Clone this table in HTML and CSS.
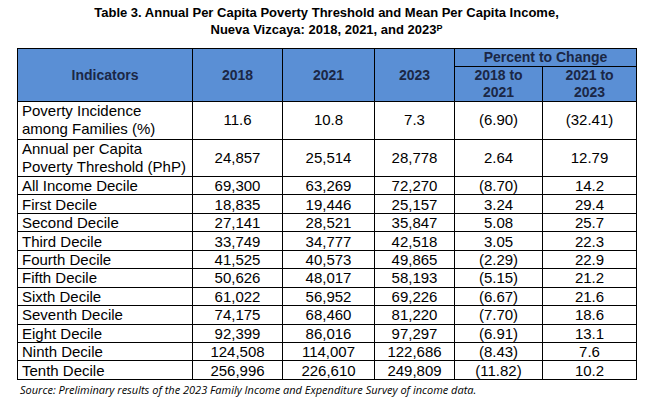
FILE: index.html
```html
<!DOCTYPE html>
<html>
<head>
<meta charset="utf-8">
<link rel="stylesheet" href="styles.css">
</head>
<body>
<div class="page">
  <h1 class="title">Table 3. Annual Per Capita Poverty Threshold and Mean Per Capita Income,<br>Nueva Vizcaya: 2018, 2021, and 2023<span class="sup">P</span></h1>
  <table class="data">
    <colgroup>
      <col class="c-ind"><col class="c-y1"><col class="c-y2"><col class="c-y3"><col class="c-p1"><col class="c-p2">
    </colgroup>
    <thead>
      <tr class="h1">
        <th rowspan="2">Indicators</th>
        <th rowspan="2">2018</th>
        <th rowspan="2">2021</th>
        <th rowspan="2">2023</th>
        <th colspan="2" class="pct">Percent to Change</th>
      </tr>
      <tr class="h2">
        <th>2018 to<br>2021</th>
        <th>2021 to<br>2023</th>
      </tr>
    </thead>
    <tbody>
      <tr class="tall"><td class="ind">Poverty Incidence<br>among Families (%)</td><td>11.6</td><td>10.8</td><td>7.3</td><td>(6.90)</td><td>(32.41)</td></tr>
      <tr class="tall"><td class="ind">Annual per Capita<br>Poverty Threshold (PhP)</td><td>24,857</td><td>25,514</td><td>28,778</td><td>2.64</td><td>12.79</td></tr>
      <tr><td class="ind">All Income Decile</td><td>69,300</td><td>63,269</td><td>72,270</td><td>(8.70)</td><td>14.2</td></tr>
      <tr><td class="ind">First Decile</td><td>18,835</td><td>19,446</td><td>25,157</td><td>3.24</td><td>29.4</td></tr>
      <tr><td class="ind">Second Decile</td><td>27,141</td><td>28,521</td><td>35,847</td><td>5.08</td><td>25.7</td></tr>
      <tr><td class="ind">Third Decile</td><td>33,749</td><td>34,777</td><td>42,518</td><td>3.05</td><td>22.3</td></tr>
      <tr><td class="ind">Fourth Decile</td><td>41,525</td><td>40,573</td><td>49,865</td><td>(2.29)</td><td>22.9</td></tr>
      <tr><td class="ind">Fifth Decile</td><td>50,626</td><td>48,017</td><td>58,193</td><td>(5.15)</td><td>21.2</td></tr>
      <tr><td class="ind">Sixth Decile</td><td>61,022</td><td>56,952</td><td>69,226</td><td>(6.67)</td><td>21.6</td></tr>
      <tr><td class="ind">Seventh Decile</td><td>74,175</td><td>68,460</td><td>81,220</td><td>(7.70)</td><td>18.6</td></tr>
      <tr><td class="ind">Eight Decile</td><td>92,399</td><td>86,016</td><td>97,297</td><td>(6.91)</td><td>13.1</td></tr>
      <tr><td class="ind">Ninth Decile</td><td>124,508</td><td>114,007</td><td>122,686</td><td>(8.43)</td><td>7.6</td></tr>
      <tr><td class="ind">Tenth Decile</td><td>256,996</td><td>226,610</td><td>249,809</td><td>(11.82)</td><td>10.2</td></tr>
    </tbody>
  </table>
  <p class="source">Source: Preliminary results of the 2023 Family Income and Expenditure Survey of income data.</p>
</div>
</body>
</html>
```
FILE: styles.css
```css
html, body {
  margin: 0;
  padding: 0;
  background: #ffffff;
}
.page {
  width: 650px;
  height: 400px;
  padding: 4px 0 0 17px;
  box-sizing: border-box;
  font-family: "Liberation Sans", Arial, sans-serif;
  color: #000;
}
.title {
  margin: 0 0 10px 0;
  width: 619px;
  text-align: center;
  font-size: 13px;
  line-height: 17px;
  font-weight: bold;
  color: #000;
}
.sup {
  font-size: 9px;
  vertical-align: 3px;
  line-height: 0;
}
.data {
  border-collapse: collapse;
  width: 619px;
  table-layout: fixed;
  font-size: 15px;
}
.c-ind { width: 175px; }
.c-y1 { width: 90px; }
.c-y2 { width: 92px; }
.c-y3 { width: 80px; }
.c-p1 { width: 88px; }
.c-p2 { width: 94px; }
.data th, .data td {
  border: 1px solid #000;
  padding: 0;
  text-align: center;
  vertical-align: middle;
}
.data th {
  background: #5a8fd5;
  color: #1b2745;
  font-weight: bold;
  font-size: 14px;
  line-height: 17px;
}
.h1 th { height: 16px; }
.h2 th { height: 33px; }
.data td {
  height: 17.45px;
  line-height: 17px;
}
.tall td {
  height: 36.5px;
  line-height: 18px;
}
.data td.ind {
  text-align: left;
  padding-left: 4px;
}
.source {
  margin: 2px 0 0 3px;
  font-family: "Open Sans", sans-serif;
  font-style: italic;
  font-size: 11px;
  line-height: 15px;
  color: #000;
}
```
